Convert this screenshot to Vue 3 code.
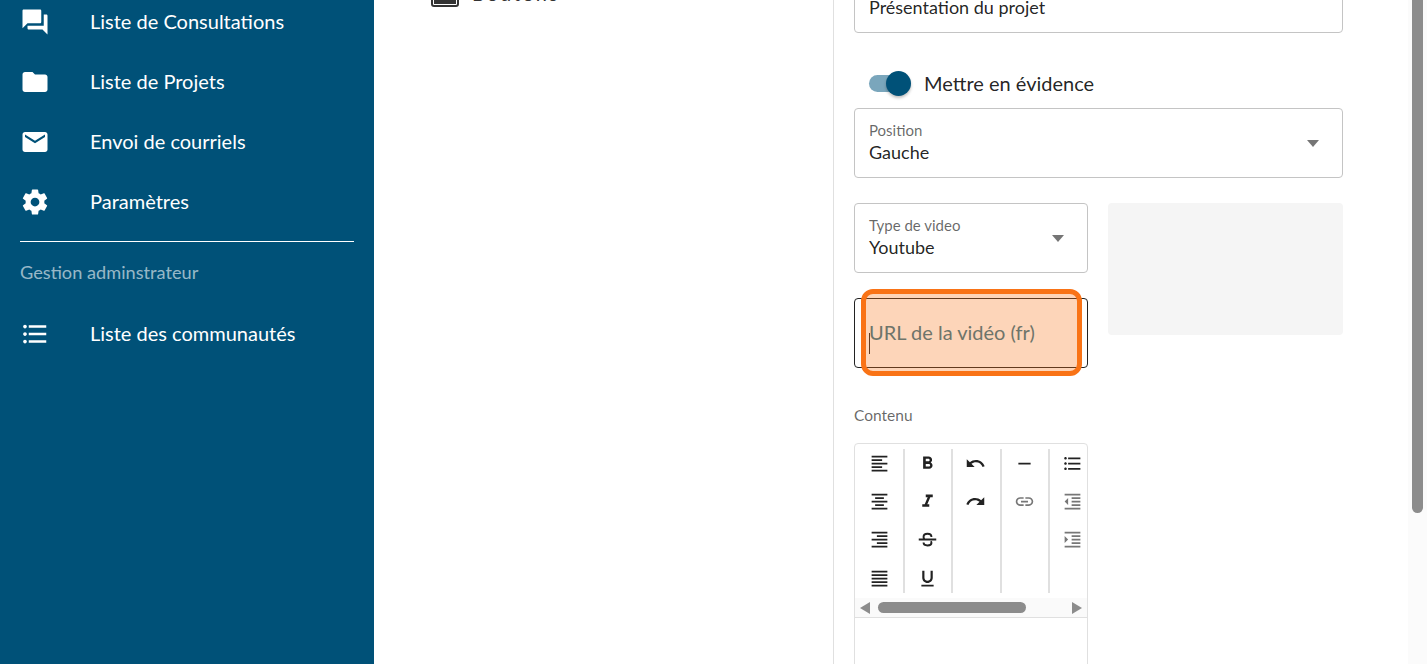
<script setup>
// menu de gauche
const menu = [
  { label: 'Liste de Consultations', icon: 'M21 6h-2v9H6v2c0 .55.45 1 1 1h11l4 4V7c0-.55-.45-1-1-1zm-4 6V3c0-.55-.45-1-1-1H3c-.55 0-1 .45-1 1v14l4-4h10c.55 0 1-.45 1-1z' },
  { label: 'Liste de Projets', icon: 'M10 4H4c-1.1 0-1.99.9-1.99 2L2 18c0 1.1.9 2 2 2h16c1.1 0 2-.9 2-2V8c0-1.1-.9-2-2-2h-8l-2-2z' },
  { label: 'Envoi de courriels', icon: 'M20 4H4c-1.1 0-1.99.9-1.99 2L2 18c0 1.1.9 2 2 2h16c1.1 0 2-.9 2-2V6c0-1.1-.9-2-2-2zm0 4l-8 5-8-5V6l8 5 8-5v2z' },
  { label: 'Paramètres', icon: 'M12,15.5A3.5,3.5 0 0,1 8.5,12A3.5,3.5 0 0,1 12,8.5A3.5,3.5 0 0,1 15.5,12A3.5,3.5 0 0,1 12,15.5M19.43,12.97C19.47,12.65 19.5,12.33 19.5,12C19.5,11.67 19.47,11.34 19.43,11L21.54,9.37C21.73,9.22 21.78,8.95 21.66,8.73L19.66,5.27C19.54,5.05 19.27,4.96 19.05,5.05L16.56,6.05C16.04,5.66 15.5,5.32 14.87,5.07L14.5,2.42C14.46,2.18 14.25,2 14,2H10C9.75,2 9.54,2.18 9.5,2.42L9.13,5.07C8.5,5.32 7.96,5.66 7.44,6.05L4.95,5.05C4.73,4.96 4.46,5.05 4.34,5.27L2.34,8.73C2.21,8.95 2.27,9.22 2.46,9.37L4.57,11C4.53,11.34 4.5,11.67 4.5,12C4.5,12.33 4.53,12.65 4.57,12.97L2.46,14.63C2.27,14.78 2.21,15.05 2.34,15.27L4.34,18.73C4.46,18.95 4.73,19.03 4.95,18.95L7.44,17.94C7.96,18.34 8.5,18.68 9.13,18.93L9.5,21.58C9.54,21.82 9.75,22 10,22H14C14.25,22 14.46,21.82 14.5,21.58L14.87,18.93C15.5,18.67 16.04,18.34 16.56,17.94L19.05,18.95C19.27,19.03 19.54,18.95 19.66,18.73L21.66,15.27C21.78,15.05 21.73,14.78 21.54,14.63L19.43,12.97Z' }
]
const listIcon = 'M4 10.5c-.83 0-1.5.67-1.5 1.5s.67 1.5 1.5 1.5 1.5-.67 1.5-1.5-.67-1.5-1.5-1.5zm0-6c-.83 0-1.5.67-1.5 1.5S3.17 7.5 4 7.5 5.5 6.83 5.5 6 4.83 4.5 4 4.5zm0 12c-.83 0-1.5.68-1.5 1.5s.68 1.5 1.5 1.5 1.5-.68 1.5-1.5-.67-1.5-1.5-1.5zM7 19h14v-2H7v2zm0-6h14v-2H7v2zm0-8v2h14V5H7z'

// barre d'outils de l'éditeur, une liste par groupe
const toolbar = [
  [
    { d: 'M15 15H3v2h12v-2zm0-8H3v2h12V7zM3 13h18v-2H3v2zm0 8h18v-2H3v2zM3 3v2h18V3H3z' },
    { d: 'M7 15v2h10v-2H7zm-4 6h18v-2H3v2zm0-8h18v-2H3v2zm4-6v2h10V7H7zM3 3v2h18V3H3z' },
    { d: 'M3 21h18v-2H3v2zm6-4h12v-2H9v2zm-6-4h18v-2H3v2zm6-4h12V7H9v2zM3 3v2h18V3H3z' },
    { d: 'M3 21h18v-2H3v2zm0-4h18v-2H3v2zm0-4h18v-2H3v2zm0-4h18V7H3v2zm0-6v2h18V3H3z' }
  ],
  [
    { d: 'M15.6 10.79c.97-.67 1.65-1.77 1.65-2.79 0-2.26-1.75-4-4-4H7v14h7.04c2.09 0 3.71-1.7 3.71-3.79 0-1.52-.86-2.82-2.15-3.42zM10 6.5h3c.83 0 1.5.67 1.5 1.5s-.67 1.5-1.5 1.5h-3v-3zm3.5 9H10v-3h3.5c.83 0 1.5.67 1.5 1.5s-.67 1.5-1.5 1.5z' },
    { d: 'M10 4v3h2.21l-3.42 8H6v3h8v-3h-2.21l3.42-8H18V4z' },
    { d: 'M16.5 9c0-2.4-2-3.5-4.5-3.5S7.5 6.6 7.5 9c0 1 .4 2 1.2 3M15.8 14c.5.6.7 1.2.7 2 0 1.6-2 2.8-4.5 2.8S7.5 17.6 7.5 15.5M2 12h20', line: true },
    { d: 'M12 17c3.31 0 6-2.69 6-6V3h-2.5v8c0 1.93-1.57 3.5-3.5 3.5S8.5 12.93 8.5 11V3H6v8c0 3.31 2.69 6 6 6zm-7 2v2h14v-2H5z' }
  ],
  [
    { d: 'M12.5 8c-2.65 0-5.05.99-6.9 2.6L2 7v9h9l-3.62-3.62c1.39-1.16 3.16-1.88 5.12-1.88 3.54 0 6.55 2.31 7.6 5.5l2.37-.78C21.08 11.03 17.15 8 12.5 8z' },
    { d: 'M18.4 10.6C16.55 8.99 14.15 8 11.5 8c-4.65 0-8.58 3.03-9.96 7.22L3.9 16c1.05-3.19 4.05-5.5 7.6-5.5 1.95 0 3.73.72 5.12 1.88L13 16h9V7l-3.6 3.6z' }
  ],
  [
    { d: 'M19 13H5v-2h14v2z' },
    { d: 'M3.9 12c0-1.71 1.39-3.1 3.1-3.1h4V7H7c-2.76 0-5 2.24-5 5s2.24 5 5 5h4v-1.9H7c-1.71 0-3.1-1.39-3.1-3.1zM8 13h8v-2H8v2zm9-6h-4v1.9h4c1.71 0 3.1 1.39 3.1 3.1s-1.39 3.1-3.1 3.1h-4V17h4c2.76 0 5-2.24 5-5s-2.24-5-5-5z', off: true }
  ],
  [
    { d: 'M4 10.5c-.83 0-1.5.67-1.5 1.5s.67 1.5 1.5 1.5 1.5-.67 1.5-1.5-.67-1.5-1.5-1.5zm0-6c-.83 0-1.5.67-1.5 1.5S3.17 7.5 4 7.5 5.5 6.83 5.5 6 4.83 4.5 4 4.5zm0 12c-.83 0-1.5.68-1.5 1.5s.68 1.5 1.5 1.5 1.5-.68 1.5-1.5-.67-1.5-1.5-1.5zM7 19h14v-2H7v2zm0-6h14v-2H7v2zm0-8v2h14V5H7z' },
    { d: 'M11 17h10v-2H11v2zm-8-5l4 4V8l-4 4zm0 9h18v-2H3v2zM3 3v2h18V3H3zm8 6h10V7H11v2zm0 4h10v-2H11v2z', off: true },
    { d: 'M3 21h18v-2H3v2zM3 8v8l4-4-4-4zm8 9h10v-2H11v2zM3 3v2h18V3H3zm8 6h10V7H11v2zm0 4h10v-2H11v2z', off: true }
  ]
]
</script>

<template>
  <div class="page">
    <!-- menu -->
    <aside class="sidebar">
      <ul class="nav">
        <li v-for="item in menu" :key="item.label" class="nav-item">
          <svg class="nav-icon" viewBox="0 0 24 24"><path :d="item.icon" /></svg>
          <span class="nav-text">{{ item.label }}</span>
        </li>
      </ul>
      <hr class="divider" />
      <p class="nav-title">Gestion adminstrateur</p>
      <div class="nav-item">
        <svg class="nav-icon" viewBox="0 0 24 24"><path :d="listIcon" /></svg>
        <span class="nav-text">Liste des communautés</span>
      </div>
    </aside>

    <!-- colonne du milieu -->
    <section class="blocks">
      <div class="block-row">
        <svg class="block-icon" viewBox="0 0 28 12">
          <rect x="1" y="-8" width="26" height="19" rx="2" fill="none" stroke="#333" stroke-width="2" />
          <rect x="3" y="-8" width="22" height="17" fill="#333" />
        </svg>
        <span class="block-name">Boutons</span>
      </div>
    </section>

    <!-- formulaire -->
    <section class="form">
      <div class="field first">
        <span class="field-label">Titre</span>
        <span class="field-value">Présentation du projet</span>
      </div>

      <div class="switch-row">
        <span class="switch"><span class="switch-thumb"></span></span>
        <span class="switch-label">Mettre en évidence</span>
      </div>

      <div class="field">
        <span class="field-label">Position</span>
        <span class="field-value">Gauche</span>
        <span class="caret"></span>
      </div>

      <div class="video-row">
        <div class="video-fields">
          <div class="field">
            <span class="field-label">Type de video</span>
            <span class="field-value">Youtube</span>
            <span class="caret"></span>
          </div>
          <div class="url-wrap">
            <div class="field url">
              <i class="cursor"></i>
              <span class="placeholder">URL de la vidéo (fr)</span>
            </div>
            <div class="highlight"></div>
          </div>
        </div>
        <div class="preview"></div>
      </div>

      <p class="content-label">Contenu</p>

      <div class="editor">
        <div class="toolbar">
          <div v-for="(group, i) in toolbar" :key="i" class="tool-group">
            <button v-for="tool in group" :key="tool.d" class="tool" type="button">
              <svg viewBox="0 0 24 24" :class="{ off: tool.off, line: tool.line }"><path :d="tool.d" /></svg>
            </button>
          </div>
        </div>
        <div class="hscroll">
          <span class="arrow left"></span>
          <span class="hthumb"></span>
          <span class="arrow right"></span>
        </div>
        <div class="editor-text"></div>
      </div>
    </section>

    <div class="scrollbar"><div class="scroll-thumb"></div></div>
  </div>
</template>

<style>
html, body {
  margin: 0;
  overflow: hidden;
}
</style>

<style scoped>
.page {
  display: flex;
  height: 664px;
  overflow: hidden;
  background: #fff;
  font-family: Lato, sans-serif;
  color: rgba(0, 0, 0, 0.87);
}

/* Sidebar */
.sidebar {
  width: 374px;
  flex: none;
  background: #005178;
  color: #fff;
}
.nav {
  list-style: none;
  margin: -8px 0 0;
  padding: 0;
}
.nav-item {
  display: flex;
  align-items: center;
  height: 60px;
  padding-left: 20px;
  font-size: 20px;
}
.nav-text {
  padding-bottom: 2px;
}
.nav-icon {
  width: 30px;
  height: 30px;
  margin-right: 40px;
  fill: #fff;
}
.divider {
  margin: 9px 20px 0;
  border: none;
  border-top: 1px solid #fff;
}
.nav-title {
  margin: 19px 0 0 20px;
  height: 22px;
  line-height: 22px;
  font-size: 18.2px;
  color: rgba(255, 255, 255, 0.6);
}
.nav-title + .nav-item {
  margin-top: 21px;
}

/* Colonne du milieu */
.blocks {
  width: 460px;
  flex: none;
  box-sizing: border-box;
  border-right: 1px solid #e0e0e0;
  padding-left: 57px;
}
.block-row {
  display: flex;
  height: 7px;
}
.block-icon {
  width: 28px;
  height: 12px;
  margin-top: -5px;
  flex: none;
}
.block-name {
  margin: -19px 0 0 13px;
  font-size: 20px;
  line-height: 24px;
  letter-spacing: 2px;
  color: #333;
}

/* Formulaire */
.form {
  width: 489px;
  flex: none;
  margin-left: 20px;
}
.field {
  position: relative;
  box-sizing: border-box;
  height: 70px;
  padding: 12px 14px 0;
  border: 1px solid #c4c4c4;
  border-radius: 4px;
  background: #fff;
}
.first {
  margin-top: -37px;
}
.field-label {
  display: block;
  height: 18px;
  line-height: 18px;
  font-size: 15px;
  color: rgba(0, 0, 0, 0.6);
}
.field-value {
  display: block;
  height: 26px;
  line-height: 26px;
  font-size: 18px;
}
.caret {
  position: absolute;
  right: 23px;
  top: 31px;
  border-left: 6.5px solid transparent;
  border-right: 6.5px solid transparent;
  border-top: 7px solid rgba(0, 0, 0, 0.54);
}
.switch-row {
  display: flex;
  align-items: center;
  height: 25px;
  margin: 38px 0 12px;
  padding-left: 15px;
}
.switch {
  position: relative;
  width: 36px;
  height: 17px;
  border-radius: 9px;
  background: #7aa6bc;
}
.switch-thumb {
  position: absolute;
  right: -6px;
  top: -4px;
  width: 25px;
  height: 25px;
  border-radius: 50%;
  background: #005178;
  box-shadow: 0 2px 3px rgba(0, 0, 0, 0.25);
}
.switch-label {
  margin-left: 19px;
  padding-bottom: 2px;
  font-size: 20px;
}
.video-row {
  display: flex;
  gap: 20px;
  margin-top: 25px;
}
.video-fields {
  display: flex;
  flex-direction: column;
  gap: 25px;
  width: 234px;
}
.preview {
  width: 235px;
  height: 132px;
  border-radius: 4px;
  background: #f5f5f5;
}
.url-wrap {
  position: relative;
}
.url {
  display: flex;
  align-items: center;
  padding-top: 0;
  border-color: #222;
}
.placeholder {
  position: relative;
  z-index: 1;
  padding-bottom: 2px;
  font-size: 20px;
  color: #6e746a;
}
.cursor {
  width: 1px;
  height: 21px;
  margin-top: 21px;
  margin-right: -1px;
  background: #222;
}
.highlight {
  position: absolute;
  left: 7px;
  top: -9px;
  width: 221px;
  height: 87px;
  box-sizing: border-box;
  border: 5px solid #f97316;
  border-radius: 12px;
  background: rgba(249, 115, 22, 0.3);
}
.content-label {
  margin: 38px 0 0;
  height: 18px;
  line-height: 18px;
  font-size: 15.5px;
  color: rgba(0, 0, 0, 0.6);
}

/* Editeur */
.editor {
  box-sizing: border-box;
  width: 234px;
  height: 240px;
  margin-top: 19px;
  border: 1px solid #e0e0e0;
  border-radius: 4px;
  overflow: hidden;
}
.toolbar {
  display: flex;
  height: 154px;
  padding: 5px 0 0 1.6px;
  box-sizing: border-box;
  overflow: hidden;
}
.tool-group {
  flex: none;
  box-sizing: border-box;
  width: 48.4px;
  height: 144px;
  border-right: 2px solid #e0e0e0;
}
.tool {
  display: flex;
  align-items: center;
  justify-content: center;
  width: 45px;
  height: 38.4px;
  margin-top: -5px;
  margin-bottom: 5px;
  padding: 0;
  border: none;
  background: none;
}
.tool svg {
  width: 21px;
  height: 21px;
  fill: #222;
}
.tool svg.off {
  fill: #777;
}
.tool svg.line {
  fill: none;
  stroke: #222;
  stroke-width: 2.2;
}
.hscroll {
  display: flex;
  align-items: center;
  position: relative;
  height: 19px;
  background: #fafafa;
  border-bottom: 1px solid #e0e0e0;
}
.hthumb {
  position: absolute;
  left: 23px;
  width: 148px;
  height: 11px;
  border-radius: 6px;
  background: #8c8c8c;
}
.arrow {
  position: absolute;
  border-top: 6px solid transparent;
  border-bottom: 6px solid transparent;
}
.arrow.left {
  left: 5px;
  border-right: 10px solid #8c8c8c;
}
.arrow.right {
  right: 5px;
  border-left: 10px solid #8c8c8c;
}

/* Barre de défilement */
.scrollbar {
  position: absolute;
  left: 1408px;
  top: 0;
  width: 19px;
  height: 664px;
  background: #fbfbfb;
}
.scroll-thumb {
  width: 11px;
  height: 513px;
  margin-left: 4px;
  border-radius: 0 0 6px 6px;
  background: #8c8c8c;
}
</style>
